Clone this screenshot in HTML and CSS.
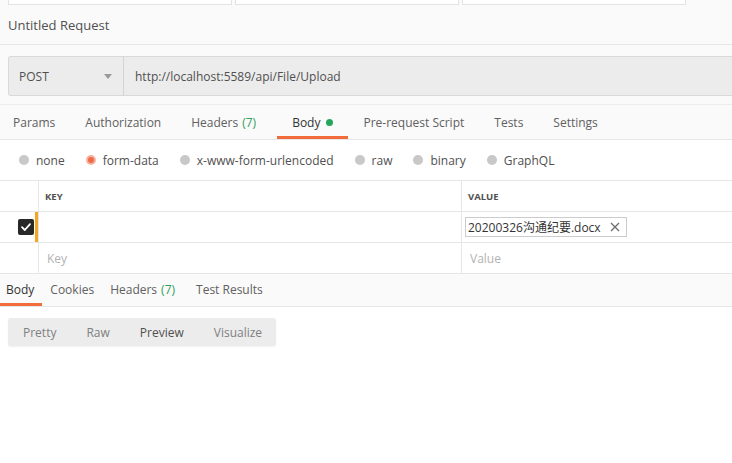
FILE: index.html
```html
<!DOCTYPE html>
<html lang="en">
<head>
    <meta charset="UTF-8">
    <title>Untitled Request</title>
    <link rel="stylesheet" href="styles.css">
</head>
<body>
    <!-- Open request tabs -->
    <div class="open-tabs">
        <div class="open-tab"></div>
        <div class="open-tab"></div>
        <div class="open-tab"></div>
    </div>

    <div class="title-bar">Untitled Request</div>

    <!-- Method + URL -->
    <div class="url-row">
        <div class="url-bar">
            <div class="method">
                <span>POST</span>
                <span class="caret"></span>
            </div>
            <div class="url">http://localhost:5589/api/File/Upload</div>
        </div>
    </div>

    <!-- Request tabs -->
    <div class="tabs req-tabs">
        <div class="tab">Params</div>
        <div class="tab">Authorization</div>
        <div class="tab">Headers <span class="count">(7)</span></div>
        <div class="tab active">Body <span class="dot"></span></div>
        <div class="tab">Pre-request Script</div>
        <div class="tab">Tests</div>
        <div class="tab">Settings</div>
    </div>

    <div class="body-types">
        <label class="radio"><span class="circle"></span>none</label>
        <label class="radio"><span class="circle on"></span>form-data</label>
        <label class="radio"><span class="circle"></span>x-www-form-urlencoded</label>
        <label class="radio"><span class="circle"></span>raw</label>
        <label class="radio"><span class="circle"></span>binary</label>
        <label class="radio"><span class="circle"></span>GraphQL</label>
    </div>

    <!-- Form data table -->
    <div class="kv-table">
        <div class="kv-row kv-head">
            <div class="cell check"></div>
            <div class="cell">KEY</div>
            <div class="cell">VALUE</div>
        </div>
        <div class="kv-row">
            <div class="cell check">
                <span class="checkbox">
                    <svg width="12" height="12" viewBox="0 0 12 12"><path d="M2 6.2 L4.8 9 L10 3.2" fill="none" stroke="#fff" stroke-width="1.8" stroke-linecap="round" stroke-linejoin="round"/></svg>
                </span>
                <span class="focus-bar"></span>
            </div>
            <div class="cell"></div>
            <div class="cell">
                <span class="file-chip">20200326沟通纪要.docx
                    <svg width="10" height="10" viewBox="0 0 10 10"><path d="M1 1 L9 9 M9 1 L1 9" stroke="#6b6b6b" stroke-width="1.3"/></svg>
                </span>
            </div>
        </div>
        <div class="kv-row">
            <div class="cell check"></div>
            <div class="cell placeholder">Key</div>
            <div class="cell placeholder">Value</div>
        </div>
    </div>

    <!-- Response -->
    <div class="tabs resp-tabs">
        <div class="tab active">Body</div>
        <div class="tab">Cookies</div>
        <div class="tab">Headers <span class="count">(7)</span></div>
        <div class="tab">Test Results</div>
    </div>

    <div class="resp-body">
        <div class="segmented">
            <span class="seg">Pretty</span>
            <span class="seg">Raw</span>
            <span class="seg current">Preview</span>
            <span class="seg">Visualize</span>
        </div>
    </div>
</body>
</html>
```

FILE: styles.css
```css
/* Base */
body {
    margin: 0;
    font-family: 'Open Sans', 'Noto Sans CJK SC', sans-serif;
    font-size: 12px;
    color: #505050;
    background: #ffffff;
    overflow: hidden;
}

/* Open tabs strip */
.open-tabs {
    display: flex;
    gap: 3px;
    height: 5px;
    padding-left: 8px;
    background: #fafafa;
}

.open-tab {
    width: 222px;
    background: #ffffff;
    border: 1px solid #e3e3e3;
    border-top: none;
}

.title-bar {
    height: 39px;
    line-height: 40px;
    padding-left: 8px;
    font-size: 13px;
    color: #505050;
    background: #fafafa;
    border-bottom: 1px solid #e6e6e6;
}

/* URL bar */
.url-row {
    padding: 11px 0 8px 8px;
    background: #fafafa;
}

.url-bar {
    display: flex;
    height: 38px;
    background: #ececec;
    border: 1px solid #d9d9d9;
    border-right: none;
    border-radius: 3px 0 0 3px;
}

.method {
    display: flex;
    align-items: center;
    justify-content: space-between;
    width: 94px;
    padding: 0 10px;
    border-right: 1px solid #d4d4d4;
    color: #505050;
}

.caret {
    width: 0;
    height: 0;
    border-left: 4px solid transparent;
    border-right: 4px solid transparent;
    border-top: 5px solid #9a9a9a;
    margin-right: 1px;
}

.url {
    display: flex;
    align-items: center;
    padding-left: 11px;
    color: #505050;
}

/* Tabs */
.tabs {
    display: flex;
    background: #fafafa;
}

.tab {
    display: flex;
    align-items: center;
    gap: 4px;
    padding: 0 15px;
    border-bottom: 3px solid transparent;
    white-space: nowrap;
    color: #606060;
}

.tab.active {
    border-bottom-color: #f26b3a;
    color: #333333;
}

.count {
    color: #2f9e58;
}

.dot {
    width: 7px;
    height: 7px;
    margin-left: 2px;
    border-radius: 50%;
    background: #26a65b;
}

.req-tabs {
    height: 31px;
    padding-top: 3px;
    margin-left: -2px;
    border-top: 1px solid #ededed;
    border-bottom: 1px solid #e6e6e6;
}

.req-tabs .tab.active {
    margin-left: 6px;
}

/* Body type radios */
.body-types {
    display: flex;
    align-items: center;
    gap: 21px;
    height: 40px;
    padding-left: 19px;
}

.radio {
    display: flex;
    align-items: center;
    gap: 7px;
    color: #505050;
}

.circle {
    width: 10px;
    height: 10px;
    border-radius: 50%;
    background: #c8c8c8;
}

.circle.on {
    width: 6px;
    height: 6px;
    background: #f06a4a;
    border: 2px solid #f5b4a0;
}

/* Key/value table */
.kv-table {
    border-top: 1px solid #e6e6e6;
}

.kv-row {
    display: grid;
    grid-template-columns: 38px 423px 1fr;
    height: 30px;
    border-bottom: 1px solid #e6e6e6;
}

.kv-head {
    font-size: 9.5px;
    font-weight: 700;
    color: #505050;
}

.cell {
    display: flex;
    align-items: center;
    padding-left: 6px;
    border-left: 1px solid #e6e6e6;
}

.cell.check {
    position: relative;
    border-left: none;
    padding-left: 18px;
}

.checkbox {
    display: flex;
    align-items: center;
    justify-content: center;
    width: 16px;
    height: 16px;
    border-radius: 2px;
    background: #282828;
}

.focus-bar {
    position: absolute;
    right: 0;
    top: 0;
    bottom: 0;
    width: 3px;
    background: #f5a623;
}

.file-chip {
    display: inline-flex;
    align-items: center;
    gap: 9px;
    height: 18px;
    padding: 0 6px 0 2px;
    margin-left: -3px;
    border: 1px solid #cccccc;
    color: #333333;
    font-size: 12px;
}

.placeholder {
    color: #b3b3b3;
    padding-left: 8px;
}

/* Response */
.resp-tabs {
    height: 30px;
    padding-top: 2px;
    border-bottom: 1px solid #e6e6e6;
}

.resp-tabs .tab {
    padding: 0 8px;
}

.resp-tabs .tab.active {
    padding-left: 6px;
}

.resp-tabs .tab:nth-child(3) {
    padding-right: 13px;
}

.resp-body {
    padding: 11px 8px;
}

.segmented {
    display: inline-flex;
    width: 268px;
    height: 28px;
    align-items: center;
    background: #ececec;
    border-radius: 3px;
    box-shadow: 0 1px 2px rgba(0, 0, 0, 0.06);
}

.seg {
    padding: 0 15px;
    color: #808080;
}

.seg.current {
    color: #505050;
}
```
